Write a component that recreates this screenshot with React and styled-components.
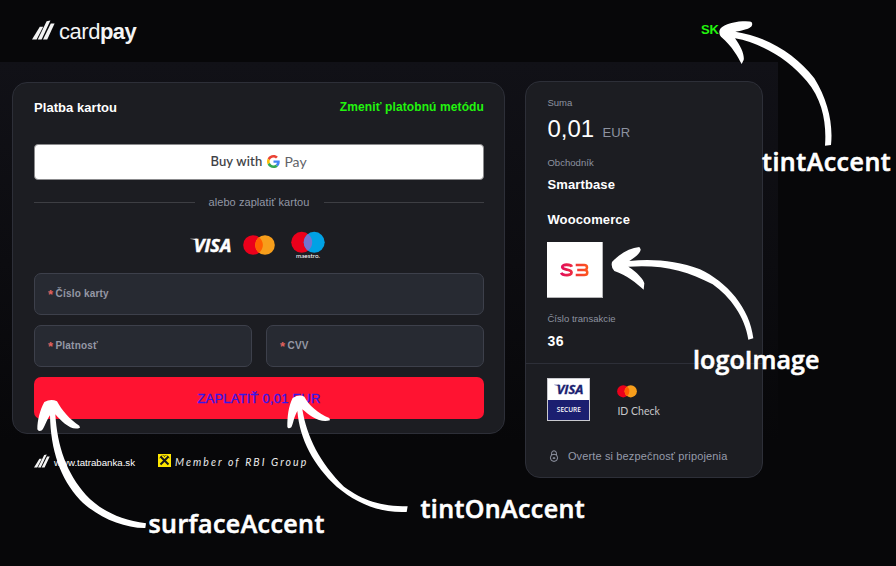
import React from 'react';
import styled, { createGlobalStyle } from 'styled-components';

const GlobalStyle = createGlobalStyle`
  * { box-sizing: border-box; }
  html, body { margin: 0; background: #070709; }
  body {
    overflow: hidden;
    color: #fff;
    font-family: "Liberation Sans", Arial, sans-serif;
  }
  svg { display: block; flex: none; overflow: visible; }
`;

const Page = styled.div`
  position: relative;
  width: 896px;
  height: 566px;
  overflow: hidden;
`;

const Header = styled.header`
  display: flex;
  align-items: flex-start;
  justify-content: space-between;
  width: 778px;
  height: 62px;
  padding: 20px 59px 0 32px;
`;

const Brand = styled.div`
  display: flex;
  align-items: flex-start;
  gap: 4px;
`;

const BrandName = styled.span`
  font-size: 22px;
  line-height: 23px;
  letter-spacing: -0.45px;
  color: #f4f4f4;
`;

const BrandStrong = styled.b`
  letter-spacing: -0.6px;
`;

const Language = styled.a`
  font-size: 13px;
  font-weight: 700;
  line-height: 20px;
  color: #22f40e;
`;

const Content = styled.main`
  display: flex;
  align-items: flex-start;
  gap: 20px;
  width: 778px;
  height: 504px;
  padding: 19px 15px 0 12px;
  background: linear-gradient(#111117 0, #0c0c10 200px, #070709 380px);
`;

const PaymentColumn = styled.div`
  width: 493.4px;
  padding-top: 1px;
`;

const Panel = styled.section`
  border: 1px solid #2d2f38;
  border-radius: 15px;
  background: #1c1d22;
`;

const PaymentCard = styled(Panel)`
  height: 352px;
  padding: 15px 20.4px 0 21px;
`;

const CardHeader = styled.div`
  display: flex;
  align-items: center;
  justify-content: space-between;
  height: 19px;
`;

const Title = styled.h1`
  margin: 0;
  font-size: 13px;
  line-height: 19px;
  letter-spacing: 0.05px;
`;

const MethodLink = styled.a`
  font-size: 12px;
  font-weight: 700;
  letter-spacing: 0.11px;
  line-height: 19px;
  color: #22f40e;
`;

const GooglePay = styled.button`
  display: flex;
  align-items: center;
  justify-content: center;
  width: 100%;
  height: 36px;
  margin-top: 27px;
  padding: 0 1px 2px 0;
  border: 1px solid #8b8b8d;
  border-radius: 4px;
  background: #fff;
  font-family: Lato, sans-serif;
  color: #3c4043;
`;

const BuyText = styled.span`
  margin-right: 5px;
  font-size: 13px;
  font-weight: 500;
  letter-spacing: 0.2px;
  -webkit-text-stroke: 0.1px #3c4043;
`;

const PayText = styled.span`
  margin-left: 4px;
  font-size: 14px;
  color: #5f6368;
`;

const Divider = styled.div`
  display: flex;
  align-items: center;
  gap: 14px;
  height: 20px;
  margin-top: 12px;
  font-size: 11px;
  letter-spacing: 0.07px;
  color: #9297a5;

  &::before, &::after {
    content: "";
    flex: 1;
    height: 1px;
    background: #3d3e43;
  }
`;

const CardBrands = styled.div`
  display: flex;
  justify-content: center;
  height: 30px;
  margin: 19px 0 12px;
  padding-right: 3px;

  & > :nth-child(1) { margin-top: 7px; }
  & > :nth-child(2) { margin: 4px 16px 0 11px; }
`;

const Fields = styled.div`
  display: grid;
  grid-template-columns: 1fr 1fr;
  gap: 10px 14px;
`;

const Field = styled.label`
  display: flex;
  align-items: center;
  grid-column: ${({ $wide }) => ($wide ? 'span 2' : 'auto')};
  height: 42px;
  padding: 0 13px 2px;
  border: 1px solid #3d404b;
  border-radius: 7px;
  background: #272a32;
  font-size: 10px;
  font-weight: 700;
  letter-spacing: 0.2px;
  color: #9598a5;
`;

const Required = styled.span`
  width: 7.5px;
  padding-top: 3px;
  font-size: 13px;
  line-height: 12px;
  color: #e0625f;
`;

const PayButton = styled.button`
  display: block;
  width: 100%;
  height: 42px;
  margin-top: 10px;
  padding: 0;
  border: 0;
  border-radius: 7px;
  background: #ff1331;
  font-family: inherit;
  font-size: 13px;
  letter-spacing: 0.2px;
  color: #3717e8;
  -webkit-text-stroke: 0.3px #3717e8;
`;

const Footer = styled.footer`
  display: flex;
  align-items: center;
  height: 18px;
  margin-top: 18px;
  padding-left: 22px;
`;

const BankLink = styled.a`
  width: 104px;
  margin-left: 4px;
  padding-top: 3px;
  font-size: 9.7px;
  line-height: 14px;
  letter-spacing: -0.02px;
`;

const MemberText = styled.span`
  margin-left: 4px;
  padding-top: 2px;
  font: italic 400 10.5px/14px Lato, sans-serif;
  letter-spacing: 2.05px;
  white-space: nowrap;
  color: #ececec;
`;

const Summary = styled(Panel)`
  width: 237.6px;
  height: 397px;
`;

const Details = styled.dl`
  height: 282px;
  margin: 0;
  padding: 14px 21px 0;
  border-bottom: 1px solid #2d2f38;
`;

const Label = styled.dt`
  font-size: 9.5px;
  line-height: 14px;
  letter-spacing: 0.04px;
  color: #8d93a0;
`;

const Amount = styled.dd`
  display: flex;
  align-items: baseline;
  gap: 8.5px;
  margin: 5px 0 9px;
  font-size: 24px;
  line-height: 28px;
`;

const Currency = styled.span`
  font-size: 13px;
  color: #8d93a0;
`;

const Value = styled.dd`
  margin: 0 0 ${({ $gap }) => $gap || 0}px;
  padding-top: 6px;
  font-size: ${({ $size }) => $size || 13}px;
  font-weight: 700;
  line-height: 18px;
  letter-spacing: ${({ $spacing }) => $spacing || 0.13}px;
`;

const MerchantLogo = styled.dd`
  display: grid;
  place-items: center;
  width: 56px;
  height: 56px;
  margin: 0 0 14px;
  border: solid #b5b5b7;
  border-width: 0 1px 1px 0;
  background: #fff;
`;

const Security = styled.div`
  display: flex;
  align-items: flex-start;
  gap: 27px;
  padding: 14px 21px 0;
`;

const VisaSecure = styled.div`
  width: 43px;
  height: 43px;
  border: 1px solid #c9c9cf;
  background: #fff;
`;

const SecureLogo = styled.div`
  display: grid;
  place-items: center;
  height: 21px;
`;

const SecureBand = styled.div`
  height: 20px;
  background: #1b1f70;
  font: 600 6.5px/20px "Open Sans", sans-serif;
  letter-spacing: 0.05px;
  text-align: center;
`;

const IdentityCheck = styled.div`
  display: flex;
  flex-direction: column;
  gap: 4px;
  padding-top: 7px;
  font: 400 10.5px/18px Lato, sans-serif;
  color: #c6c6c9;
`;

const Connection = styled.a`
  display: flex;
  align-items: center;
  gap: 8.5px;
  height: 20px;
  margin: 25px 0 0 23px;
  font-size: 11px;
  letter-spacing: 0.14px;
  color: #969baa;
`;

const Overlay = styled.svg`
  position: absolute;
  inset: 0;
  pointer-events: none;
`;

const Note = styled.span`
  position: absolute;
  left: ${({ $x }) => $x}px;
  top: ${({ $y }) => $y}px;
  font: 600 25px/34px "Open Sans", sans-serif;
  font-feature-settings: "calt" 0, "clig" 0, "liga" 0;
  -webkit-text-stroke: 0.6px #fff;
  letter-spacing: ${({ $spacing }) => $spacing}px;
  white-space: nowrap;
`;

const Stripes = ({ width, height }) => (
  <svg width={width} height={height} viewBox="0 0 23 20" fill="#f4f4f4">
    <path d="M0 19.5 7.8 6.8H11.2L4.6 19.5Z" />
    <path d="M5.8 19.5 14.6 1.2 18.4 0.6 9.6 19.5Z" />
    <path d="M11 19.5 18.8 3.4H22.6L15.2 19.5Z" />
  </svg>
);

const Visa = ({ width, height, color }) => (
  <svg width={width} height={height} viewBox="0 0 42 15">
    <path d="M0.3 0.8H7L7.7 3.1C5.4 2 3 1.4 0.3 1.1Z" fill={color} />
    <text x="3.8" y="14" textLength="37.5" lengthAdjust="spacingAndGlyphs" fill={color}
      stroke={color} strokeWidth="0.5" fontFamily="Open Sans, sans-serif" fontSize="18.2" fontStyle="italic" fontWeight="700">VISA</text>
  </svg>
);

const Mastercard = ({ width, height }) => (
  <svg width={width} height={height} viewBox="0 0 32 20">
    <circle cx="10" cy="10" r="9.8" fill="#eb001b" />
    <circle cx="22" cy="10" r="9.8" fill="#f79e1b" />
    <path d="M16 2.2a9.8 9.8 0 0 1 0 15.6a9.8 9.8 0 0 1 0-15.6" fill="#ff5f00" />
  </svg>
);

const Maestro = () => (
  <svg width="34" height="30" viewBox="0 0 34 30">
    <circle cx="10.7" cy="11.3" r="10.5" fill="#eb001b" />
    <circle cx="23.2" cy="11.3" r="10.5" fill="#00a2e5" />
    <path d="M17 2.9a10.5 10.5 0 0 1 0 16.8a10.5 10.5 0 0 1 0-16.8" fill="#7375cf" />
    <text x="5" y="27.3" textLength="24" lengthAdjust="spacingAndGlyphs" fontFamily="Lato, sans-serif" fontSize="6" fontWeight="400" fill="#fff">maestro.</text>
  </svg>
);

const GoogleG = () => (
  <svg width="13" height="13" viewBox="0 0 48 48">
    <path fill="#EA4335" d="M24 9.5c3.54 0 6.71 1.22 9.21 3.6l6.85-6.85C35.9 2.38 30.47 0 24 0 14.62 0 6.51 5.38 2.56 13.22l7.98 6.19C12.43 13.72 17.74 9.5 24 9.5z" />
    <path fill="#4285F4" d="M46.98 24.55c0-1.57-.15-3.09-.38-4.55H24v9.02h12.94c-.58 2.96-2.26 5.48-4.78 7.18l7.73 6c4.51-4.18 7.09-10.36 7.09-17.65z" />
    <path fill="#FBBC05" d="M10.53 28.59c-.48-1.45-.76-2.99-.76-4.59s.27-3.14.76-4.59l-7.98-6.19C.92 16.46 0 20.12 0 24c0 3.88.92 7.54 2.56 10.78l7.97-6.19z" />
    <path fill="#34A853" d="M24 48c6.48 0 11.93-2.13 15.89-5.81l-7.73-6c-2.15 1.45-4.92 2.3-8.16 2.3-6.26 0-11.57-4.22-13.47-9.91l-7.98 6.19C6.51 42.62 14.62 48 24 48z" />
  </svg>
);

const SmartbaseMark = () => (
  <svg width="29" height="14" viewBox="0 0 29 14" fill="none" strokeWidth="2.8">
    <defs>
      <linearGradient id="mark" gradientUnits="userSpaceOnUse" x1="0" y1="0" x2="29" y2="0">
        <stop stopColor="#e0095d" />
        <stop offset="1" stopColor="#ff5a1a" />
      </linearGradient>
    </defs>
    <path stroke="url(#mark)" d="M11.8 3.7C10.8 1.4 2.3.7 2.3 4.1C2.3 7.8 11.5 5.5 11.5 9.6C11.5 13.3 2.4 12.7 1.3 9.7" />
    <path stroke="url(#mark)" strokeWidth="2.5" d="M15.7 2H24.2Q27 2 27 4.4T24.2 6.9H17.2M24.2 6.9Q27.3 6.9 27.3 9.5T24.2 12.1H15.7" />
  </svg>
);

const RbiMark = () => (
  <svg width="13" height="13" viewBox="0 0 13 13">
    <path fill="#fee600" d="M0 -1H13V12H0Z" />
    <path d="M2.5 1.5 10.5 9.5M10.5 1.5 2.5 9.5" stroke="#17171b" strokeWidth="2" />
    <path d="M1.5 3 4.4 .4M8.6 .4 11.5 3M5.5 .2 6.5 1.6 7.5 .2" stroke="#17171b" strokeWidth="0.8" fill="none" />
  </svg>
);

const Lock = () => (
  <svg width="10" height="12" viewBox="0 0 10 12" fill="none" stroke="#969baa">
    <circle cx="5" cy="7.8" r="3.6" />
    <path d="M2.6 5V3.2a2.4 2.4 0 0 1 4.8 0V5M5 7v1.8M3.7 8.2h2.6" />
  </svg>
);

const Arrows = () => (
  <Overlay width="896" height="566" viewBox="0 0 896 566" fill="#fff">
    <path transform="translate(596 0) scale(.33333)" d="M371 90C376 76 410 66 440 64Q463 63 467 67C473 77 462 84 450 88Q435 93 418 95C520 112 600 165 655 235C695 300 712 370 705 435L687 437C692 370 680 300 632 243C580 180 500 130 417 115C435 140 446 165 443 180L437 192C425 170 410 140 375 110Q368 103 371 90Z" />
    <path transform="translate(520 230) scale(.33333)" d="M276 96C300 70 330 54 358 51L362 58C362 70 345 82 328 93C400 86 470 92 540 118C620 155 690 235 700 325L685 329C675 260 630 200 578 163C500 120 420 103 325 110C350 125 372 150 373 160L371 179C350 160 320 135 283 123Q272 112 276 96Z" />
    <path transform="translate(0 380) scale(.33333)" d="M133 66Q153 55 171 64C185 90 210 120 238 137L240 143C215 155 185 125 166 103C172 200 200 280 258 345C300 390 360 420 438 430L436 444C370 445 290 410 240 360C180 295 152 210 150 106C140 120 135 140 126 151Q115 156 112 148C112 120 120 90 133 66Z" />
    <path transform="translate(270 380) scale(.33333)" d="M68 54Q88 42 103 50C115 75 145 100 178 114L180 121C150 130 120 108 97 88C110 170 150 250 222 320C280 362 330 378 413 379L410 396C330 400 260 370 200 320C130 255 90 180 82 93C72 110 70 130 64 142Q54 148 52 140C52 110 55 80 68 54Z" />
  </Overlay>
);

export default function App() {
  return (
    <Page>
      <GlobalStyle />
      <Header>
        <Brand>
          <Stripes width={23} height={20} />
          <BrandName>card<BrandStrong>pay</BrandStrong></BrandName>
        </Brand>
        <Language>SK</Language>
      </Header>
      <Content>
        <PaymentColumn>
          <PaymentCard>
            <CardHeader>
              <Title>Platba kartou</Title>
              <MethodLink>Zmeniť platobnú metódu</MethodLink>
            </CardHeader>
            <GooglePay>
              <BuyText>Buy with</BuyText>
              <GoogleG />
              <PayText>Pay</PayText>
            </GooglePay>
            <Divider>alebo zaplatiť kartou</Divider>
            <CardBrands>
              <Visa width={42} height={15} color="#fff" />
              <Mastercard width={32} height={20} />
              <Maestro />
            </CardBrands>
            <Fields>
              <Field $wide><Required>*</Required>Číslo karty</Field>
              <Field><Required>*</Required>Platnosť</Field>
              <Field><Required>*</Required>CVV</Field>
            </Fields>
            <PayButton>ZAPLATIŤ 0,01 EUR</PayButton>
          </PaymentCard>
          <Footer>
            <Stripes width={16} height={14} />
            <BankLink>www.tatrabanka.sk</BankLink>
            <RbiMark />
            <MemberText>Member of RBI Group</MemberText>
          </Footer>
        </PaymentColumn>
        <Summary>
          <Details>
            <Label>Suma</Label>
            <Amount>0,01<Currency>EUR</Currency></Amount>
            <Label>Obchodník</Label>
            <Value $gap={11}>Smartbase</Value>
            <Value $gap={13}>Woocomerce</Value>
            <MerchantLogo><SmartbaseMark /></MerchantLogo>
            <Label>Číslo transakcie</Label>
            <Value $size={14} $spacing={0.6}>36</Value>
          </Details>
          <Security>
            <VisaSecure>
              <SecureLogo>
                <Visa width={30} height={11} color="#1b1f70" />
              </SecureLogo>
              <SecureBand>SECURE</SecureBand>
            </VisaSecure>
            <IdentityCheck>
              <Mastercard width={20} height={12.5} />
              ID Check
            </IdentityCheck>
          </Security>
          <Connection><Lock />Overte si bezpečnosť pripojenia</Connection>
        </Summary>
      </Content>
      <Arrows />
      <Note $x={762} $y={144} $spacing={0.5}>tintAccent</Note>
      <Note $x={693} $y={342} $spacing={0.1}>logoImage</Note>
      <Note $x={148.5} $y={506} $spacing={0.42}>surfaceAccent</Note>
      <Note $x={420.5} $y={491} $spacing={0.4}>tintOnAccent</Note>
    </Page>
  );
}
